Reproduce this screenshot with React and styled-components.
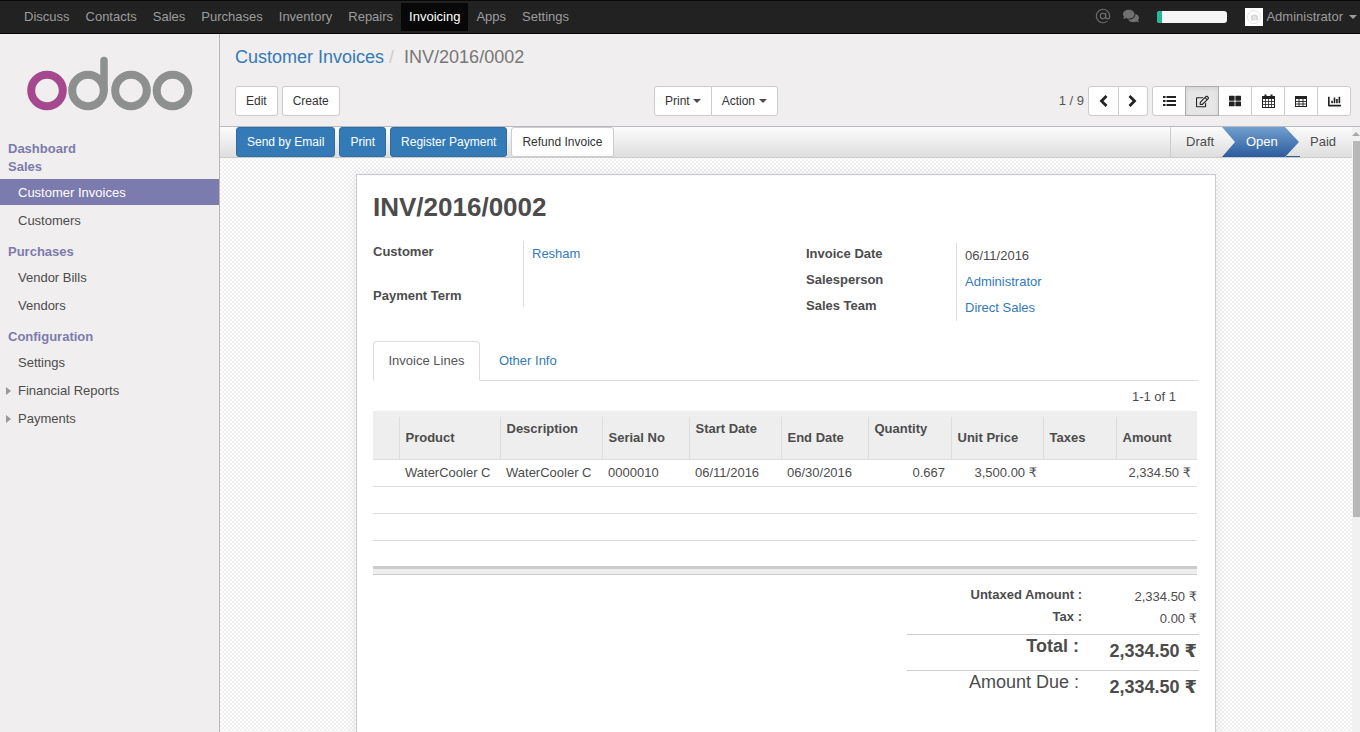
import styled, { createGlobalStyle } from 'styled-components';
import { AtSign } from 'lucide-react';
import { FaComments, FaCamera, FaRegEdit, FaThLarge, FaChartBar } from 'react-icons/fa';

const topMenu = ['Discuss', 'Contacts', 'Sales', 'Purchases', 'Inventory', 'Repairs', 'Invoicing', 'Apps', 'Settings'];

const columns = [
  { title: '', width: 26 },
  { title: 'Product', width: 101 },
  { title: 'Description', width: 102, raised: true },
  { title: 'Serial No', width: 87 },
  { title: 'Start Date', width: 92, raised: true },
  { title: 'End Date', width: 87 },
  { title: 'Quantity', width: 83, raised: true },
  { title: 'Unit Price', width: 92 },
  { title: 'Taxes', width: 73 },
  { title: 'Amount', width: 81 },
];

const GlobalStyle = createGlobalStyle`
  html, body {
    margin: 0;
    height: 100%;
    overflow: hidden;
  }
  body {
    font-family: "Liberation Sans", Arial, sans-serif;
    font-size: 13px;
    line-height: 20px;
    color: #4c4c4c;
    background: #f0eeee;
  }
`;

const Page = styled.div`
  height: 732px;
  display: flex;
  flex-direction: column;
  overflow: hidden;
`;

const TopBar = styled.div`
  height: 34px;
  box-sizing: border-box;
  flex: none;
  display: flex;
  align-items: center;
  background: #222;
  border-top: 1px solid #080808;
  border-bottom: 1px solid #080808;
  padding: 0 3px 0 16px;
`;

const TopItem = styled.a`
  height: 28px;
  line-height: 28px;
  padding: 0 8px;
  color: ${(p) => (p.$active ? '#fff' : '#9d9d9d')};
  background: ${(p) => (p.$active ? '#080808' : 'transparent')};
`;

const TopRight = styled.div`
  margin-left: auto;
  display: flex;
  align-items: center;
  color: #707070;
`;

const SystrayIcon = styled.span`
  display: flex;
  font-size: ${(p) => p.$size}px;
  margin-right: ${(p) => p.$right}px;
  margin-top: -3px;
`;

const Progress = styled.div`
  width: 70px;
  height: 12px;
  margin-right: 18px;
  border-radius: 3px;
  overflow: hidden;
  background: #f5f5f5;
  &::before {
    content: '';
    display: block;
    width: 5px;
    height: 100%;
    background: #21b799;
  }
`;

const Avatar = styled.div`
  width: 18px;
  height: 18px;
  background: #fff;
  display: flex;
  align-items: center;
  justify-content: center;
  margin-right: 3px;
`;

const AvatarRing = styled.span`
  width: 14px;
  height: 14px;
  box-sizing: border-box;
  border: 1px solid #e4e4e4;
  border-radius: 50%;
  color: #d8d8d8;
  font-size: 7px;
  display: flex;
  align-items: center;
  justify-content: center;
`;

const UserName = styled.span`
  color: #9d9d9d;
`;

const Caret = styled.span`
  display: inline-block;
  width: 0;
  height: 0;
  margin-left: ${(p) => p.$left ?? 2}px;
  border-top: 4px solid ${(p) => p.$color || '#4c4c4c'};
  border-left: 4px solid transparent;
  border-right: 4px solid transparent;
  vertical-align: middle;
`;

const Shell = styled.div`
  flex: 1;
  min-height: 0;
  display: flex;
`;

const Sidebar = styled.aside`
  width: 220px;
  box-sizing: border-box;
  flex: none;
  border-right: 1px solid #b8b8b8;
  background: #f0eeee;
`;

const LogoWrap = styled.div`
  height: 105px;
  padding-left: 27px;
  box-sizing: border-box;
  padding-top: 22px;
  svg { display: block; }
`;

const MenuHeading = styled.div`
  height: 18px;
  line-height: 20px;
  padding-left: 8px;
  font-weight: 700;
  color: #7c7bad;
  margin-top: ${(p) => p.$top || 0}px;
`;

const MenuList = styled.div`
  margin-top: 4px;
  display: flex;
  flex-direction: column;
  gap: 2px;
`;

const MenuItem = styled.a`
  height: 26px;
  box-sizing: border-box;
  padding-top: 2px;
  padding-left: ${(p) => (p.$folder ? 6 : 18)}px;
  display: flex;
  align-items: center;
  color: ${(p) => (p.$active ? '#fff' : '#4c4c4c')};
  background: ${(p) => (p.$active ? '#7c7bad' : 'transparent')};
`;

const FolderArrow = styled.span`
  width: 0;
  height: 0;
  margin-right: 7px;
  border-left: 5px solid #999;
  border-top: 4px solid transparent;
  border-bottom: 4px solid transparent;
`;

const Main = styled.main`
  flex: 1;
  min-width: 0;
  display: flex;
  flex-direction: column;
`;

const ControlPanel = styled.div`
  height: 93px;
  box-sizing: border-box;
  flex: none;
  padding: 13px 9px 0 15px;
  border-bottom: 1px solid #b9b9c3;
`;

const Breadcrumb = styled.div`
  font-size: 18px;
  line-height: 20px;
  color: #777;
  display: flex;
`;

const CrumbLink = styled.a`
  color: #337ab7;
`;

const CrumbSlash = styled.span`
  color: #ccc;
  margin: 0 10px 0 5px;
`;

const ControlRow = styled.div`
  display: grid;
  grid-template-columns: 419px auto 1fr;
  margin-top: 19px;
`;

const ButtonRow = styled.div`
  display: flex;
  gap: 4px;
`;

const Button = styled.button`
  height: 30px;
  box-sizing: border-box;
  padding: 0 10px;
  font: 12px/18px "Liberation Sans", Arial, sans-serif;
  color: #333;
  background: #fff;
  border: 1px solid #ccc;
  border-radius: 3px;
`;

const ButtonGroup = styled.div`
  display: flex;
  ${Button} {
    border-radius: 0;
    margin-left: -1px;
    width: ${(p) => (p.$cell ? `${p.$cell}px` : 'auto')};
    padding: ${(p) => (p.$cell ? 0 : '0 10px')};
    display: flex;
    align-items: center;
    justify-content: center;
  }
  ${Button}:first-child {
    margin-left: 0;
    border-radius: 3px 0 0 3px;
  }
  ${Button}:last-child {
    border-radius: 0 3px 3px 0;
  }
`;

const ViewButton = styled(Button)`
  font-size: ${(p) => p.$icon || 13}px;
  color: #222;
  background: ${(p) => (p.$active ? '#e6e6e6' : '#fff')};
  ${(p) => p.$active && 'border-color: #adadad; box-shadow: inset 0 2px 4px rgba(0,0,0,.08); position: relative;'}
`;

const RightControls = styled.div`
  display: flex;
  justify-content: flex-end;
  align-items: center;
  gap: 4px;
`;

const PagerText = styled.span`
  color: #555;
`;

const WorkArea = styled.div`
  flex: 1;
  min-height: 0;
  display: flex;
`;

const Content = styled.div`
  flex: 1;
  min-width: 0;
  display: flex;
  flex-direction: column;
  overflow: hidden;
  background-color: #fff;
  background-image: conic-gradient(#f0f0f0 25%, #fff 0 50%, #f0f0f0 0 75%, #fff 0);
  background-size: 4px 4px;
`;

const ScrollTrack = styled.div`
  width: 8px;
  flex: none;
  background: #f1f1f1;
`;

const ScrollArrow = styled.div`
  width: 0;
  height: 0;
  margin: 5px 0 0 0;
  border-bottom: 4px solid #a8a8a8;
  border-left: 4px solid transparent;
  border-right: 4px solid transparent;
`;

const ScrollThumb = styled.div`
  height: 376px;
  margin-top: 5px;
  margin-left: 1px;
  background: #b8b8b8;
`;

const StatusBar = styled.div`
  height: 31px;
  box-sizing: border-box;
  flex: none;
  display: flex;
  padding-left: 16px;
  gap: 4px;
  background: linear-gradient(#fcfcfc, #dedede);
  border-bottom: 1px solid #ccc;
`;

const ActionButton = styled(Button)`
  padding: 0 10px;
  color: ${(p) => (p.$primary ? '#fff' : '#333')};
  background: ${(p) => (p.$primary ? '#337ab7' : '#fff')};
  border-color: ${(p) => (p.$primary ? '#2e6da4' : '#ccc')};
`;

const Stages = styled.div`
  position: relative;
  margin-left: auto;
  display: flex;
  height: 30px;
  border-left: 1px solid #ccc;
  &::after {
    content: '';
    position: absolute;
    right: 52px;
    bottom: 0;
    width: 14px;
    height: 1px;
    background: #2b5c9e;
  }
`;

const Stage = styled.div`
  width: ${(p) => p.$w}px;
  box-sizing: border-box;
  padding-left: ${(p) => p.$pad}px;
  line-height: 30px;
  color: #4c4c4c;
`;

const ActiveStage = styled(Stage)`
  color: #fff;
  background: linear-gradient(#729fcf, #2b5c9e);
  clip-path: polygon(0 0, 63px 0, 100% 50%, 63px 100%, 0 100%, 13px 50%);
`;

const Sheet = styled.div`
  width: 860px;
  box-sizing: border-box;
  flex: none;
  margin: 16px auto 0;
  height: 700px;
  padding: 16px 16px 0;
  background: #fff;
  border: 1px solid #c9c8d6;
  box-shadow: 0 0 14px rgba(0, 0, 0, 0.08);
`;

const Title = styled.h1`
  margin: 0;
  font-size: 26px;
  line-height: 32px;
  font-weight: 700;
  color: #4c4c4c;
`;

const Fields = styled.div`
  display: flex;
  margin-top: 18px;
`;

const FieldGroup = styled.div`
  display: grid;
  grid-template-columns: 150px 1fr;
  grid-template-rows: ${(p) => p.$rows};
  width: ${(p) => p.$w}px;
  margin-top: ${(p) => p.$top || 0}px;
`;

const FieldLabel = styled.div`
  font-weight: 700;
  padding-top: 1px;
`;

const FieldValue = styled.div`
  padding: 3px 0 0 8px;
  border-left: 1px solid #ddd;
`;

const Link = styled.a`
  color: #337ab7;
`;

const Tabs = styled.div`
  height: 40px;
  box-sizing: border-box;
  display: flex;
  gap: 3px;
  margin-top: 20px;
  border-bottom: 1px solid #ddd;
`;

const Tab = styled.a`
  height: 40px;
  box-sizing: border-box;
  padding: 9px 15px 9px 14.5px;
  border: 1px solid ${(p) => (p.$active ? '#ddd' : 'transparent')};
  border-bottom-color: ${(p) => (p.$active ? '#fff' : 'transparent')};
  border-radius: 4px 4px 0 0;
  background: ${(p) => (p.$active ? '#fff' : 'transparent')};
  color: ${(p) => (p.$active ? '#555' : '#337ab7')};
`;

const ListPager = styled.div`
  height: 30px;
  line-height: 32px;
  text-align: right;
  padding-right: 23px;
`;

const Table = styled.table`
  width: 824px;
  table-layout: fixed;
  border-collapse: separate;
  border-spacing: 0;
`;

const Th = styled.th`
  position: relative;
  height: 49px;
  box-sizing: border-box;
  padding: ${(p) => (p.$raised ? 9 : 18)}px 4px 0 6.5px;
  vertical-align: top;
  text-align: left;
  line-height: 18px;
  font-weight: 700;
  background: #eee;
  border-bottom: 1px solid #ddd;
  white-space: nowrap;
  &:not(:first-child)::before {
    content: '';
    position: absolute;
    left: 0;
    top: 6px;
    bottom: 0;
    width: 1px;
    background: #ddd;
  }
`;

const Td = styled.td`
  height: 27px;
  box-sizing: border-box;
  padding: 0 6px;
  text-align: ${(p) => (p.$right ? 'right' : 'left')};
  border-bottom: 1px solid #ddd;
  white-space: nowrap;
`;

const SpacerCell = styled.td`
  height: 25px;
  padding: 0;
`;

const FootCell = styled.td`
  height: 9px;
  box-sizing: border-box;
  padding: 0;
  background: #eee;
  border-top: 3px solid #ccc;
  border-bottom: 1px solid #ccc;
`;

const Totals = styled.div`
  width: 292px;
  margin: 9px 0 0 auto;
`;

const SubRow = styled.div`
  display: grid;
  grid-template-columns: 175px 1fr;
  height: 22px;
`;

const SubLabel = styled.div`
  font-weight: 700;
  text-align: right;
  padding-top: 1px;
`;

const SubValue = styled.div`
  text-align: right;
  padding: 3px 2px 0 0;
`;

const GrandRow = styled.div`
  display: grid;
  grid-template-columns: 172px 1fr;
  height: 36px;
  box-sizing: border-box;
  border-top: 1px solid #ccc;
  margin-top: ${(p) => p.$top || 0}px;
`;

const GrandLabel = styled.div`
  font-size: 18px;
  line-height: 22px;
  text-align: right;
  font-weight: ${(p) => (p.$bold ? 700 : 400)};
`;

const GrandValue = styled.div`
  font-size: 18px;
  line-height: 22px;
  font-weight: 700;
  text-align: right;
  padding: 5px 2px 0 0;
`;

const Rupee = styled.span`
  font-family: "DejaVu Sans", sans-serif;
`;

const Chevron = ({ d }) => (
  <svg width="9" height="12" viewBox="0 0 9 12">
    <path d={d} fill="none" stroke="#222" strokeWidth="2.8" />
  </svg>
);

const ListIcon = () => (
  <svg width="13" height="12" viewBox="0 0 13 12" fill="#222">
    <rect x="0" y="1" width="2.5" height="2" />
    <rect x="0" y="5" width="2.5" height="2" />
    <rect x="0" y="9" width="2.5" height="2" />
    <rect x="3.5" y="1" width="9.5" height="2" />
    <rect x="3.5" y="5" width="9.5" height="2" />
    <rect x="3.5" y="9" width="9.5" height="2" />
  </svg>
);

const CalendarIcon = () => (
  <svg width="13" height="14" viewBox="0 0 13 14">
    <rect x="0.5" y="2.5" width="12" height="11" fill="none" stroke="#222" />
    <rect x="0" y="2" width="13" height="3" fill="#222" />
    <rect x="2.5" y="0.5" width="2" height="3" fill="#222" />
    <rect x="8.5" y="0.5" width="2" height="3" fill="#222" />
    <path d="M3.5 5v8M6.5 5v8M9.5 5v8M1 7.5h11M1 10.5h11" stroke="#222" strokeWidth="0.8" fill="none" />
  </svg>
);

const TableIcon = () => (
  <svg width="12" height="11" viewBox="0 0 12 11">
    <rect x="0.5" y="0.5" width="11" height="10" fill="none" stroke="#222" />
    <rect x="0" y="0" width="12" height="3" fill="#222" />
    <path d="M4 3v7M8 3v7M1 5.5h10M1 8h10" stroke="#222" strokeWidth="0.9" fill="none" />
  </svg>
);

const Logo = () => (
  <svg width="166" height="56" viewBox="0 0 166 56">
    <circle cx="20" cy="34.5" r="15.8" fill="none" stroke="#a5488e" strokeWidth="8" />
    <circle cx="61" cy="34.5" r="15.8" fill="none" stroke="#8e908f" strokeWidth="8" />
    <path d="M77 34V4.5" fill="none" stroke="#8e908f" strokeWidth="7.5" strokeLinecap="round" />
    <circle cx="104" cy="34.5" r="15.8" fill="none" stroke="#8e908f" strokeWidth="8" />
    <circle cx="145.5" cy="34.5" r="15.8" fill="none" stroke="#8e908f" strokeWidth="8" />
  </svg>
);

export default function App() {
  return (
    <Page>
      <GlobalStyle />
      <TopBar>
        {topMenu.map((name) => (
          <TopItem key={name} $active={name === 'Invoicing'}>{name}</TopItem>
        ))}
        <TopRight>
          <SystrayIcon $size={16} $right={12}><AtSign size={16} strokeWidth={1.6} /></SystrayIcon>
          <SystrayIcon $size={16} $right={18}><FaComments /></SystrayIcon>
          <Progress />
          <Avatar><AvatarRing><FaCamera /></AvatarRing></Avatar>
          <UserName>Administrator</UserName>
          <Caret $left={6} $color="#9d9d9d" />
        </TopRight>
      </TopBar>
      <Shell>
        <Sidebar>
          <LogoWrap><Logo /></LogoWrap>
          <MenuHeading>Dashboard</MenuHeading>
          <MenuHeading>Sales</MenuHeading>
          <MenuList>
            <MenuItem $active>Customer Invoices</MenuItem>
            <MenuItem>Customers</MenuItem>
          </MenuList>
          <MenuHeading $top={9}>Purchases</MenuHeading>
          <MenuList>
            <MenuItem>Vendor Bills</MenuItem>
            <MenuItem>Vendors</MenuItem>
          </MenuList>
          <MenuHeading $top={9}>Configuration</MenuHeading>
          <MenuList>
            <MenuItem>Settings</MenuItem>
            <MenuItem $folder><FolderArrow />Financial Reports</MenuItem>
            <MenuItem $folder><FolderArrow />Payments</MenuItem>
          </MenuList>
        </Sidebar>
        <Main>
          <ControlPanel>
            <Breadcrumb>
              <CrumbLink>Customer Invoices</CrumbLink>
              <CrumbSlash>/</CrumbSlash>
              <span>INV/2016/0002</span>
            </Breadcrumb>
            <ControlRow>
              <ButtonRow>
                <Button>Edit</Button>
                <Button>Create</Button>
              </ButtonRow>
              <ButtonGroup>
                <Button>Print <Caret $left={3} /></Button>
                <Button>Action <Caret $left={4} /></Button>
              </ButtonGroup>
              <RightControls>
                <PagerText>1 / 9</PagerText>
                <ButtonGroup $cell={30.5}>
                  <ViewButton><Chevron d="M7.5 1L2.5 6l5 5" /></ViewButton>
                  <ViewButton><Chevron d="M1.5 1l5 5-5 5" /></ViewButton>
                </ButtonGroup>
                <ButtonGroup $cell={34}>
                  <ViewButton><ListIcon /></ViewButton>
                  <ViewButton $active><FaRegEdit /></ViewButton>
                  <ViewButton $icon={12}><FaThLarge /></ViewButton>
                  <ViewButton><CalendarIcon /></ViewButton>
                  <ViewButton><TableIcon /></ViewButton>
                  <ViewButton><FaChartBar /></ViewButton>
                </ButtonGroup>
              </RightControls>
            </ControlRow>
          </ControlPanel>
          <WorkArea>
            <Content>
              <StatusBar>
                <ActionButton $primary>Send by Email</ActionButton>
                <ActionButton $primary>Print</ActionButton>
                <ActionButton $primary>Register Payment</ActionButton>
                <ActionButton>Refund Invoice</ActionButton>
                <Stages>
                  <Stage $w={51} $pad={15}>Draft</Stage>
                  <ActiveStage $w={77} $pad={24}>Open</ActiveStage>
                  <Stage $w={53} $pad={11}>Paid</Stage>
                </Stages>
              </StatusBar>
              <Sheet>
                <Title>INV/2016/0002</Title>
                <Fields>
                  <FieldGroup $w={433} $rows="44px 22px">
                    <FieldLabel>Customer</FieldLabel>
                    <FieldValue><Link>Resham</Link></FieldValue>
                    <FieldLabel>Payment Term</FieldLabel>
                    <FieldValue />
                  </FieldGroup>
                  <FieldGroup $w={393} $rows="26px 26px 26px" $top={2}>
                    <FieldLabel>Invoice Date</FieldLabel>
                    <FieldValue>06/11/2016</FieldValue>
                    <FieldLabel>Salesperson</FieldLabel>
                    <FieldValue><Link>Administrator</Link></FieldValue>
                    <FieldLabel>Sales Team</FieldLabel>
                    <FieldValue><Link>Direct Sales</Link></FieldValue>
                  </FieldGroup>
                </Fields>
                <Tabs>
                  <Tab $active>Invoice Lines</Tab>
                  <Tab>Other Info</Tab>
                </Tabs>
                <ListPager>1-1 of 1</ListPager>
                <Table>
                  <colgroup>
                    {columns.map((c) => <col key={c.title} width={c.width} />)}
                  </colgroup>
                  <thead>
                    <tr>
                      {columns.map((c) => <Th key={c.title} $raised={c.raised}>{c.title}</Th>)}
                    </tr>
                  </thead>
                  <tbody>
                    <tr>
                      <Td />
                      <Td>WaterCooler C</Td>
                      <Td>WaterCooler C</Td>
                      <Td>0000010</Td>
                      <Td>06/11/2016</Td>
                      <Td>06/30/2016</Td>
                      <Td $right>0.667</Td>
                      <Td $right>3,500.00 <Rupee>₹</Rupee></Td>
                      <Td />
                      <Td $right>2,334.50 <Rupee>₹</Rupee></Td>
                    </tr>
                    <tr><Td colSpan={10} /></tr>
                    <tr><Td colSpan={10} /></tr>
                    <tr><SpacerCell colSpan={10} /></tr>
                  </tbody>
                  <tfoot>
                    <tr><FootCell colSpan={10} /></tr>
                  </tfoot>
                </Table>
                <Totals>
                  <SubRow>
                    <SubLabel>Untaxed Amount :</SubLabel>
                    <SubValue>2,334.50 <Rupee>₹</Rupee></SubValue>
                  </SubRow>
                  <SubRow>
                    <SubLabel>Tax :</SubLabel>
                    <SubValue>0.00 <Rupee>₹</Rupee></SubValue>
                  </SubRow>
                  <GrandRow $top={6}>
                    <GrandLabel $bold>Total :</GrandLabel>
                    <GrandValue>2,334.50 <Rupee>₹</Rupee></GrandValue>
                  </GrandRow>
                  <GrandRow>
                    <GrandLabel>Amount Due :</GrandLabel>
                    <GrandValue>2,334.50 <Rupee>₹</Rupee></GrandValue>
                  </GrandRow>
                </Totals>
              </Sheet>
            </Content>
            <ScrollTrack>
              <ScrollArrow />
              <ScrollThumb />
            </ScrollTrack>
          </WorkArea>
        </Main>
      </Shell>
    </Page>
  );
}
